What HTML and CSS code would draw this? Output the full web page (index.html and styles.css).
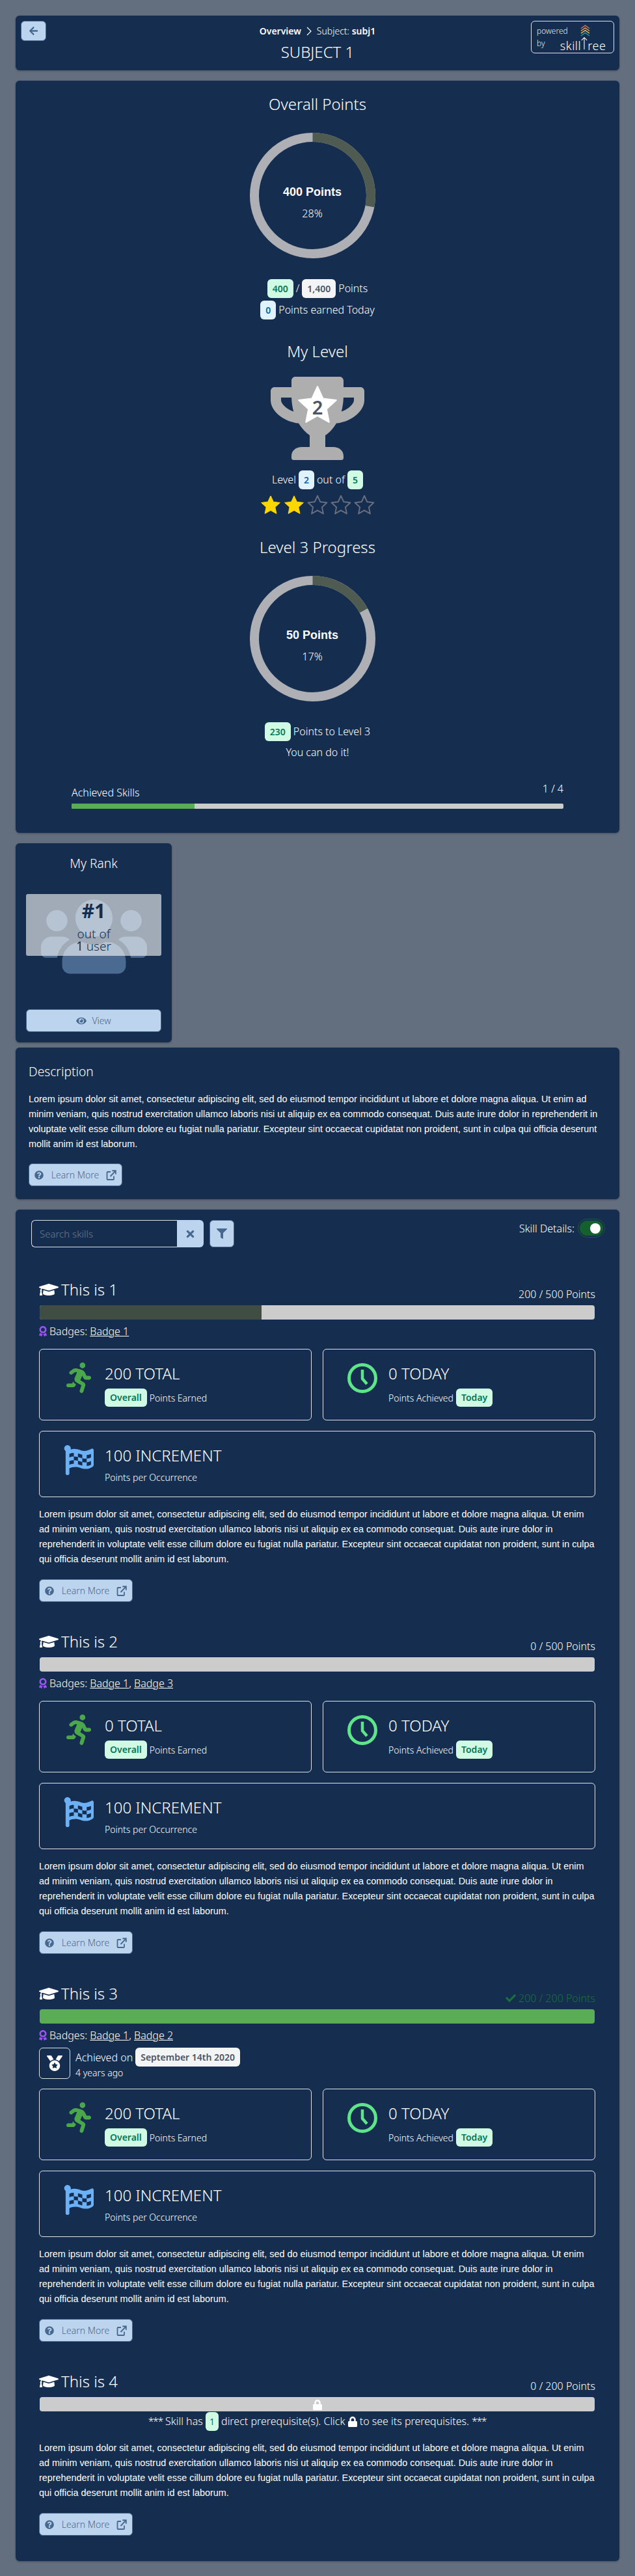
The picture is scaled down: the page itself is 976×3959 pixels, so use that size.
FILE: index.html
```html
<!DOCTYPE html>
<html lang="en">

<head>
    <meta charset="UTF-8">
    <meta name="viewport" content="width=device-width, initial-scale=1.0">
    <title>Subject 1</title>
    <link rel="stylesheet" href="styles.css">
</head>

<body>
    <svg class="icon-defs" xmlns="http://www.w3.org/2000/svg">
        <symbol id="i-cap" viewBox="0 0 640 512"><path d="M622.34 153.2L343.4 67.5c-15.2-4.67-31.6-4.67-46.79 0L17.66 153.2c-23.54 7.23-23.54 38.36 0 45.59l48.63 14.94c-10.67 13.19-17.23 29.28-17.88 46.9C38.78 266.15 32 276.11 32 288c0 10.78 5.68 19.85 13.86 25.65L20.33 428.53C18.11 438.52 25.71 448 35.94 448h56.11c10.24 0 17.84-9.48 15.62-19.47L82.14 313.65C90.32 307.85 96 298.78 96 288c0-11.57-6.47-21.25-15.66-26.87.76-15.02 8.44-28.3 20.69-36.72L296.6 284.5c9.06 2.78 26.44 6.25 46.79 0l278.95-85.7c23.55-7.24 23.55-38.36 0-45.6zM352.79 315.09c-28.53 8.76-52.84 3.92-65.59 0l-145.02-44.55L128 384c0 35.35 85.96 64 192 64s192-28.65 192-64l-14.18-113.47-145.03 44.56z"/></symbol>
        <symbol id="i-run" viewBox="0 0 416 512"><path d="M272 96c26.51 0 48-21.49 48-48S298.51 0 272 0s-48 21.49-48 48 21.49 48 48 48zM113.69 317.47l-14.8 34.52H32c-17.67 0-32 14.33-32 32s14.33 32 32 32h77.45c19.25 0 36.58-11.44 44.11-29.09l8.79-20.52-10.67-6.3c-17.32-10.23-30.06-25.37-37.99-42.61zM384 223.99h-44.03l-26.06-53.25c-12.5-25.55-35.45-44.23-61.78-50.94l-71.08-21.14c-28.3-6.8-57.77-.55-80.84 17.14l-39.67 30.41c-14.03 10.75-16.69 30.83-5.92 44.86s30.84 16.66 44.86 5.92l39.69-30.41c7.67-5.89 17.44-8 25.27-6.14l14.7 4.37-37.46 87.39c-12.62 29.48-1.31 64.01 26.3 80.31l84.98 50.17-27.47 87.73c-5.28 16.86 4.11 34.81 20.97 40.09 3.19 1 6.41 1.48 9.58 1.48 13.61 0 26.23-8.77 30.52-22.45l31.64-101.06c5.91-20.77-2.89-43.08-21.64-54.39l-61.24-36.14 31.31-78.28 20.27 41.44c8 16.34 24.92 26.89 43.11 26.89H384c17.67 0 32-14.33 32-32s-14.33-31.99-32-31.99z"/></symbol>
        <symbol id="i-clock" viewBox="0 0 46 46"><circle cx="23" cy="23" r="20.5" fill="none" stroke="currentColor" stroke-width="5"/><path d="M23 10v14l7 8" fill="none" stroke="currentColor" stroke-width="4.5" stroke-linejoin="round"/></symbol>
        <symbol id="i-flag" viewBox="0 0 512 512">
            <path d="M66 0C34 0 8 25 8 56c0 19 9.500 36 24 46v386c0 13 11 24 24 24h16c13 0 24-11 24-24v-94c28-12 64-22 114-22 54 0 98 35 165 35 48 0 87-16 123-41 9-6 14-16 14-26V88c0-23-24-39-45-21-34 16-77 32-117 32-53 0-98-35-165-35-25 0-47 4-68 12 3-7 4-15 4-24C118 24 95 1 66 0z"/>
            <path class="flag-check" d="M96 150c25-12 50-16 76-16v62c-26 0-51 5-76 16zM243 142c25 6 49 16 74 22v62c-25-6-49-16-74-22zM392 170c25-2 50-10 74-20v62c-24 10-49 18-74 20zM172 196c24 0 48 6 71 8v62c-23-2-47-8-71-8zM317 226c25 6 50 6 75 6v62c-25 0-50 0-75-6zM96 274c25-12 50-16 76-16v62c-26 0-51 5-76 16zM243 266c25 6 49 16 74 22v62c-25-6-49-16-74-22zM392 294c25-2 50-10 74-20v62c-24 10-49 18-74 20z"/>
        </symbol>
        <symbol id="i-award" viewBox="0 0 384 512"><path d="M97.12 362.63c-8.69-8.69-4.16-6.24-25.12-11.85-9.51-2.55-17.87-7.45-25.43-13.32L1.2 448.7c-4.39 10.77 3.81 22.47 15.43 22.03l52.69-2.01L105.56 507c8 8.44 22.04 5.81 26.43-4.96l52.05-127.62c-10.84 6.04-22.87 9.58-35.31 9.58-19.5 0-37.82-7.59-51.61-21.37zM382.8 448.7l-45.37-111.24c-7.56 5.88-15.92 10.77-25.43 13.32-21.07 5.64-16.45 3.18-25.12 11.85-13.79 13.78-32.12 21.37-51.62 21.37-12.44 0-24.47-3.55-35.31-9.58L252 502.04c4.39 10.77 18.44 13.4 26.43 4.96l36.25-38.28 52.69 2.01c11.62.44 19.82-11.27 15.43-22.03zM263 340c15.28-15.55 17.03-14.21 38.79-20.14 13.89-3.79 24.75-14.84 28.47-28.98 7.48-28.4 5.54-24.97 25.95-45.75 10.17-10.35 14.14-25.44 10.42-39.58-7.47-28.38-7.48-24.42 0-52.83 3.72-14.14-.25-29.23-10.42-39.58-20.41-20.78-18.47-17.36-25.95-45.75-3.72-14.14-14.58-25.19-28.47-28.98-27.88-7.61-24.52-5.62-44.95-26.41-10.17-10.35-25-14.4-38.89-10.61-27.87 7.6-23.98 7.61-51.9 0-13.89-3.79-28.72.25-38.89 10.61-20.41 20.78-17.05 18.8-44.94 26.41-13.89 3.79-24.75 14.84-28.47 28.98-7.47 28.39-5.54 24.97-25.95 45.75-10.17 10.35-14.15 25.44-10.42 39.58 7.47 28.36 7.48 24.4 0 52.82-3.72 14.14.25 29.23 10.42 39.59 20.41 20.78 18.47 17.35 25.95 45.75 3.72 14.14 14.58 25.19 28.47 28.98C104.6 325.96 106.27 325 121 340c13.23 13.47 33.84 15.88 49.74 5.82a39.676 39.676 0 0 1 42.53 0c15.89 10.06 36.5 7.65 49.73-5.82zM97.66 175.96c0-53.03 42.24-96.02 94.34-96.02s94.34 42.99 94.34 96.02-42.24 96.02-94.34 96.02-94.34-42.99-94.34-96.02z"/></symbol>
        <symbol id="i-question" viewBox="0 0 512 512"><path d="M504 256c0 136.997-111.043 248-248 248S8 392.997 8 256C8 119.083 119.043 8 256 8s248 111.083 248 248zM262.655 90c-54.497 0-89.255 22.957-116.549 63.758-3.536 5.286-2.353 12.415 2.715 16.258l34.699 26.31c5.205 3.947 12.621 3.008 16.665-2.122 17.864-22.658 30.113-35.797 57.303-35.797 20.429 0 45.698 13.148 45.698 32.958 0 14.976-12.363 22.667-32.534 33.976C247.128 238.528 216 254.941 216 296v4c0 6.627 5.373 12 12 12h56c6.627 0 12-5.373 12-12v-1.333c0-28.462 83.186-29.647 83.186-106.667 0-58.002-60.165-102-116.531-102zM256 338c-25.365 0-46 20.635-46 46 0 25.364 20.635 46 46 46s46-20.636 46-46c0-25.365-20.635-46-46-46z"/></symbol>
        <symbol id="i-link" viewBox="0 0 16 16"><path d="M7 3H2.500A1 1 0 0 0 1.500 4v10a1 1 0 0 0 1 1h8.500a1 1 0 0 0 1-1V9.500" fill="none" stroke="currentColor" stroke-width="1.800"/><path d="M6.500 10L14 2.200M9.300 1.200h5.500v5.500" fill="none" stroke="currentColor" stroke-width="1.900"/></symbol>
        <symbol id="i-lock" viewBox="0 0 448 512"><path d="M400 224h-24v-72C376 68.200 307.800 0 224 0S72 68.200 72 152v72H48c-26.500 0-48 21.500-48 48v192c0 26.500 21.500 48 48 48h352c26.500 0 48-21.500 48-48V272c0-26.500-21.500-48-48-48zm-104 0H152v-72c0-39.700 32.300-72 72-72s72 32.300 72 72v72z"/></symbol>
        <symbol id="i-star" viewBox="0 0 32 32"><path d="M16 2l4.300 9.300 10.100 1.200-7.500 6.900 2 10L16 24.400l-8.900 5 2-10-7.500-6.900 10.100-1.200z" stroke-linejoin="round"/></symbol>
    </svg>

    <header class="card top-card">
        <button class="btn btn-back"><svg viewBox="0 0 448 512" class="icon-arrow"><path d="M257.500 445.100l-22.200 22.200c-9.400 9.400-24.600 9.400-33.900 0L7 273c-9.400-9.400-9.400-24.600 0-33.900L201.400 44.700c9.400-9.400 24.600-9.400 33.900 0l22.200 22.200c9.500 9.500 9.300 25-.4 34.300L136.600 216H424c13.300 0 24 10.700 24 24v32c0 13.300-10.700 24-24 24H136.600l120.500 114.800c9.800 9.300 10 24.800.4 34.300z"/></svg></button>
        <div class="crumbs">
            <b>Overview</b>
            <svg class="crumb-sep" viewBox="0 0 8 14"><path d="M1 1l6 6-6 6" fill="none" stroke="currentColor" stroke-width="1.200"/></svg>
            <span>Subject: <b>subj1</b></span>
        </div>
        <h1 class="page-title">SUBJECT 1</h1>
        <div class="powered">
            <div class="powered-by">powered<br>by</div>
            <div class="logo">
                <svg class="logo-tree" viewBox="0 0 16 22">
                    <path d="M1 6l7-5 7 5" stroke="#e2704f"/>
                    <path d="M1 10l7-5 7 5" stroke="#f0a35e"/>
                    <path d="M1 14l7-5 7 5" stroke="#e9c46a"/>
                    <path d="M1 18l7-5 7 5" stroke="#2a9d8f"/>
                </svg>
                <div class="logo-word">skill<svg class="logo-arrow" viewBox="0 0 12 24"><path d="M1 7l5-5 5 5M6 2v22" fill="none" stroke="#fff" stroke-width="1.300"/></svg>ree</div>
            </div>
        </div>
    </header>

    <section class="card overview-card">
        <h2 class="section-title">Overall Points</h2>
        <div class="ring-wrap">
            <div class="ring">
                <svg viewBox="0 0 193 193" width="193" height="193">
                    <circle cx="96.500" cy="96.500" r="89.500" class="ring-track"/>
                    <circle cx="96.500" cy="96.500" r="89.500" class="ring-fill" pathLength="100" stroke-dasharray="28 72" transform="rotate(-90 96.500 96.500)"/>
                </svg>
                <div class="ring-value">400 Points</div>
                <div class="ring-percent">28%</div>
            </div>
        </div>
        <div class="pill-row first"><span class="pill green">400</span> / <span class="pill gray">1,400</span> Points</div>
        <div class="pill-row"><span class="pill blue">0</span> Points earned Today</div>

        <h2 class="section-title level-title">My Level</h2>
        <div class="trophy">
            <svg viewBox="0 0 576 512" width="144" height="128" class="trophy-cup"><path d="M552 64H448V24c0-13.300-10.700-24-24-24H152c-13.300 0-24 10.700-24 24v40H24C10.700 64 0 74.700 0 88v56c0 35.700 22.500 72.400 61.900 100.700 31.500 22.700 69.800 37.100 110 41.700C203.300 338.500 240 360 240 360v72h-48c-35.300 0-64 20.700-64 56v12c0 6.600 5.400 12 12 12h296c6.600 0 12-5.400 12-12v-12c0-35.300-28.700-56-64-56h-48v-72s36.700-21.500 68.100-73.600c40.300-4.600 78.600-19 110-41.700 39.300-28.300 61.900-65 61.900-100.700V88c0-13.300-10.700-24-24-24zM99.300 192.800C74.900 175.200 64 155.600 64 144v-16h64.200c1 32.600 5.800 61.200 12.800 86.200-15.100-5.200-29.200-12.400-41.700-21.400zM512 144c0 16.100-17.700 36.100-35.300 48.800-12.500 9-26.700 16.200-41.800 21.400 7-25 11.800-53.600 12.800-86.200H512v16z"/></svg>
            <svg class="trophy-star" viewBox="0 0 32 32"><use href="#i-star"/></svg>
            <span class="trophy-level">2</span>
        </div>
        <div class="pill-row level-row">Level <span class="pill blue">2</span> out of <span class="pill green">5</span></div>
        <div class="stars">
            <svg class="star on"><use href="#i-star"/></svg>
            <svg class="star on"><use href="#i-star"/></svg>
            <svg class="star"><use href="#i-star"/></svg>
            <svg class="star"><use href="#i-star"/></svg>
            <svg class="star"><use href="#i-star"/></svg>
        </div>

        <h2 class="section-title next-title">Level 3 Progress</h2>
        <div class="ring-wrap">
            <div class="ring">
                <svg viewBox="0 0 193 193" width="193" height="193">
                    <circle cx="96.500" cy="96.500" r="89.500" class="ring-track"/>
                    <circle cx="96.500" cy="96.500" r="89.500" class="ring-fill" pathLength="100" stroke-dasharray="17 83" transform="rotate(-90 96.500 96.500)"/>
                </svg>
                <div class="ring-value">50 Points</div>
                <div class="ring-percent">17%</div>
            </div>
        </div>
        <div class="pill-row first"><span class="pill green">230</span> Points to Level 3</div>
        <div class="cheer">You can do it!</div>

        <div class="achieved">
            <div class="achieved-head"><span class="achieved-label">Achieved Skills</span><span class="achieved-count">1 / 4</span></div>
            <div class="bar-thin"><div class="bar-thin-fill"></div></div>
        </div>
    </section>

    <section class="card rank-card">
        <h3 class="sub-title">My Rank</h3>
        <div class="rank-art">
            <svg class="rank-users" viewBox="0 32 640 448"><path d="M96 224c35.300 0 64-28.700 64-64s-28.700-64-64-64-64 28.700-64 64 28.700 64 64 64zm448 0c35.300 0 64-28.700 64-64s-28.700-64-64-64-64 28.700-64 64 28.700 64 64 64zm32 32h-64c-17.600 0-33.500 7.100-45.100 18.600 40.300 22.100 68.900 62 75.100 109.400h66c17.700 0 32-14.300 32-32v-32c0-35.300-28.700-64-64-64zm-256 0c61.900 0 112-50.100 112-112S381.900 32 320 32 208 82.100 208 144s50.100 112 112 112zm76.800 32h-8.300c-20.800 10-43.900 16-68.500 16s-47.600-6-68.500-16h-8.300C179.600 288 128 339.600 128 403.200V432c0 26.500 21.500 48 48 48h288c26.500 0 48-21.500 48-48v-28.800c0-63.600-51.600-115.200-115.200-115.200zm-223.700-13.400C161.500 263.100 145.600 256 128 256H64c-35.300 0-64 28.700-64 64v32c0 17.700 14.300 32 32 32h65.900c6.300-47.400 34.900-87.300 75.200-109.400z"/></svg>
            <div class="rank-overlay">
                <div class="rank-num">#1</div>
                <div class="rank-text">out of</div>
                <div class="rank-text"><b>1</b> user</div>
            </div>
        </div>
        <button class="btn btn-view"><svg viewBox="0 0 576 512" class="icon-eye"><path d="M572.520 241.400C518.290 135.590 410.930 64 288 64S57.680 135.640 3.480 241.410a32.350 32.350 0 0 0 0 29.190C57.710 376.410 165.070 448 288 448s230.320-71.640 284.520-177.410a32.350 32.350 0 0 0 0-29.190zM288 400a144 144 0 1 1 144-144 143.930 143.930 0 0 1-144 144zm0-240a95.310 95.310 0 0 0-25.310 3.790 47.850 47.850 0 0 1-66.900 66.900A95.780 95.780 0 1 0 288 160z"/></svg>View</button>
    </section>

    <section class="card desc-card">
        <h3 class="sub-title desc-title">Description</h3>
        <p class="lorem">Lorem ipsum dolor sit amet, consectetur adipiscing elit, sed do eiusmod tempor incididunt ut labore et dolore magna aliqua. Ut enim ad minim veniam, quis nostrud exercitation ullamco laboris nisi ut aliquip ex ea commodo consequat. Duis aute irure dolor in reprehenderit in voluptate velit esse cillum dolore eu fugiat nulla pariatur. Excepteur sint occaecat cupidatat non proident, sunt in culpa qui officia deserunt mollit anim id est laborum.</p>
        <button class="btn btn-learn"><svg class="icon-q"><use href="#i-question"/></svg>Learn More<svg class="icon-ext"><use href="#i-link"/></svg></button>
    </section>

    <section class="card skills-card">
        <div class="skills-bar">
            <div class="search">
                <input class="search-input" type="text" placeholder="Search skills">
                <button class="search-clear"><svg viewBox="0 0 352 512" class="icon-x"><path d="M242.720 256l100.070-100.070c12.280-12.280 12.280-32.190 0-44.480l-22.240-22.240c-12.280-12.280-32.190-12.280-44.480 0L176 189.280 75.930 89.210c-12.280-12.280-32.190-12.280-44.480 0L9.210 111.450c-12.280 12.280-12.280 32.190 0 44.480L109.280 256 9.210 356.070c-12.280 12.280-12.280 32.190 0 44.480l22.240 22.240c12.280 12.280 32.200 12.280 44.480 0L176 322.720l100.070 100.070c12.280 12.280 32.200 12.280 44.480 0l22.240-22.240c12.280-12.280 12.280-32.190 0-44.480L242.720 256z"/></svg></button>
                <button class="btn btn-filter"><svg viewBox="0 0 512 512" class="icon-filter"><path d="M487.976 0H24.028C2.710 0-8.047 25.866 7.058 40.971L192 225.941V432c0 7.831 3.821 15.170 10.237 19.662l80 55.980C298.020 518.690 320 507.493 320 487.980V225.941l184.947-184.970C520.021 25.896 509.338 0 487.976 0z"/></svg></button>
            </div>
            <div class="details-toggle">Skill Details:<span class="switch"><span class="switch-knob"></span></span></div>
        </div>

        <article class="skill">
            <div class="skill-head">
                <h4 class="skill-title"><svg class="icon-cap"><use href="#i-cap"/></svg>This is 1</h4>
                <span class="skill-points">200 / 500 Points</span>
            </div>
            <div class="bar"><div class="bar-fill dark w40"></div></div>
            <div class="badges"><svg class="icon-award"><use href="#i-award"/></svg>Badges: <a href="#">Badge 1</a></div>
            <div class="stats">
                <div class="stat">
                    <div class="stat-icon"><svg class="ic-run"><use href="#i-run"/></svg></div>
                    <div><div class="stat-num">200 TOTAL</div><div class="stat-sub"><span class="pill green">Overall</span> Points Earned</div></div>
                </div>
                <div class="stat">
                    <div class="stat-icon"><svg class="ic-clock"><use href="#i-clock"/></svg></div>
                    <div><div class="stat-num">0 TODAY</div><div class="stat-sub">Points Achieved <span class="pill green">Today</span></div></div>
                </div>
                <div class="stat wide">
                    <div class="stat-icon"><svg class="ic-flag"><use href="#i-flag"/></svg></div>
                    <div><div class="stat-num">100 INCREMENT</div><div class="stat-sub plain">Points per Occurrence</div></div>
                </div>
            </div>
            <p class="lorem skill-text">Lorem ipsum dolor sit amet, consectetur adipiscing elit, sed do eiusmod tempor incididunt ut labore et dolore magna aliqua. Ut enim ad minim veniam, quis nostrud exercitation ullamco laboris nisi ut aliquip ex ea commodo consequat. Duis aute irure dolor in reprehenderit in voluptate velit esse cillum dolore eu fugiat nulla pariatur. Excepteur sint occaecat cupidatat non proident, sunt in culpa qui officia deserunt mollit anim id est laborum.</p>
            <button class="btn btn-learn"><svg class="icon-q"><use href="#i-question"/></svg>Learn More<svg class="icon-ext"><use href="#i-link"/></svg></button>
        </article>

        <article class="skill">
            <div class="skill-head">
                <h4 class="skill-title"><svg class="icon-cap"><use href="#i-cap"/></svg>This is 2</h4>
                <span class="skill-points">0 / 500 Points</span>
            </div>
            <div class="bar"></div>
            <div class="badges"><svg class="icon-award"><use href="#i-award"/></svg>Badges: <a href="#">Badge 1</a>, <a href="#">Badge 3</a></div>
            <div class="stats">
                <div class="stat">
                    <div class="stat-icon"><svg class="ic-run"><use href="#i-run"/></svg></div>
                    <div><div class="stat-num">0 TOTAL</div><div class="stat-sub"><span class="pill green">Overall</span> Points Earned</div></div>
                </div>
                <div class="stat">
                    <div class="stat-icon"><svg class="ic-clock"><use href="#i-clock"/></svg></div>
                    <div><div class="stat-num">0 TODAY</div><div class="stat-sub">Points Achieved <span class="pill green">Today</span></div></div>
                </div>
                <div class="stat wide">
                    <div class="stat-icon"><svg class="ic-flag"><use href="#i-flag"/></svg></div>
                    <div><div class="stat-num">100 INCREMENT</div><div class="stat-sub plain">Points per Occurrence</div></div>
                </div>
            </div>
            <p class="lorem skill-text">Lorem ipsum dolor sit amet, consectetur adipiscing elit, sed do eiusmod tempor incididunt ut labore et dolore magna aliqua. Ut enim ad minim veniam, quis nostrud exercitation ullamco laboris nisi ut aliquip ex ea commodo consequat. Duis aute irure dolor in reprehenderit in voluptate velit esse cillum dolore eu fugiat nulla pariatur. Excepteur sint occaecat cupidatat non proident, sunt in culpa qui officia deserunt mollit anim id est laborum.</p>
            <button class="btn btn-learn"><svg class="icon-q"><use href="#i-question"/></svg>Learn More<svg class="icon-ext"><use href="#i-link"/></svg></button>
        </article>

        <article class="skill">
            <div class="skill-head">
                <h4 class="skill-title"><svg class="icon-cap"><use href="#i-cap"/></svg>This is 3</h4>
                <span class="skill-points done"><svg viewBox="0 0 512 512" class="icon-check"><path d="M173.898 439.404l-166.400-166.400c-9.997-9.997-9.997-26.206 0-36.204l36.203-36.204c9.997-9.998 26.207-9.998 36.204 0L192 312.690 432.095 72.596c9.997-9.997 26.207-9.997 36.204 0l36.203 36.204c9.997 9.997 9.997 26.206 0 36.204l-294.400 294.401c-9.998 9.997-26.207 9.997-36.204-.001z"/></svg>200 / 200 Points</span>
            </div>
            <div class="bar"><div class="bar-fill full"></div></div>
            <div class="badges"><svg class="icon-award"><use href="#i-award"/></svg>Badges: <a href="#">Badge 1</a>, <a href="#">Badge 2</a></div>
            <div class="achieved-on">
                <div class="medal-box"><svg viewBox="0 0 512 512" class="icon-medal"><path d="M223.750 130.750L154.620 15.540A31.997 31.997 0 0 0 127.180 0H16.030C3.080 0-4.500 14.570 2.920 25.180l111.270 158.960c29.720-27.770 67.520-46.830 109.560-53.390zM495.970 0H384.820c-11.240 0-21.660 5.900-27.440 15.540l-69.130 115.210c42.040 6.560 79.840 25.620 109.560 53.380L509.080 25.180C516.500 14.570 508.920 0 495.970 0zM256 160c-97.200 0-176 78.800-176 176s78.800 176 176 176 176-78.800 176-176-78.800-176-176-176zm92.520 157.260l-37.930 36.960 8.970 52.220c1.600 9.360-8.260 16.510-16.650 12.090L256 393.880l-46.900 24.650c-8.400 4.450-18.250-2.740-16.650-12.090l8.970-52.220-37.930-36.960c-6.820-6.640-3.050-18.230 6.350-19.590l52.430-7.640 23.430-47.520c2.110-4.280 6.190-6.390 10.280-6.390 4.110 0 8.220 2.140 10.330 6.390l23.430 47.520 52.430 7.640c9.400 1.360 13.170 12.950 6.350 19.590z"/></svg></div>
                <div>
                    <div class="achieved-date">Achieved on <span class="pill gray">September 14th 2020</span></div>
                    <div class="achieved-ago">4 years ago</div>
                </div>
            </div>
            <div class="stats">
                <div class="stat">
                    <div class="stat-icon"><svg class="ic-run"><use href="#i-run"/></svg></div>
                    <div><div class="stat-num">200 TOTAL</div><div class="stat-sub"><span class="pill green">Overall</span> Points Earned</div></div>
                </div>
                <div class="stat">
                    <div class="stat-icon"><svg class="ic-clock"><use href="#i-clock"/></svg></div>
                    <div><div class="stat-num">0 TODAY</div><div class="stat-sub">Points Achieved <span class="pill green">Today</span></div></div>
                </div>
                <div class="stat wide">
                    <div class="stat-icon"><svg class="ic-flag"><use href="#i-flag"/></svg></div>
                    <div><div class="stat-num">100 INCREMENT</div><div class="stat-sub plain">Points per Occurrence</div></div>
                </div>
            </div>
            <p class="lorem skill-text">Lorem ipsum dolor sit amet, consectetur adipiscing elit, sed do eiusmod tempor incididunt ut labore et dolore magna aliqua. Ut enim ad minim veniam, quis nostrud exercitation ullamco laboris nisi ut aliquip ex ea commodo consequat. Duis aute irure dolor in reprehenderit in voluptate velit esse cillum dolore eu fugiat nulla pariatur. Excepteur sint occaecat cupidatat non proident, sunt in culpa qui officia deserunt mollit anim id est laborum.</p>
            <button class="btn btn-learn"><svg class="icon-q"><use href="#i-question"/></svg>Learn More<svg class="icon-ext"><use href="#i-link"/></svg></button>
        </article>

        <article class="skill">
            <div class="skill-head">
                <h4 class="skill-title"><svg class="icon-cap"><use href="#i-cap"/></svg>This is 4</h4>
                <span class="skill-points">0 / 200 Points</span>
            </div>
            <div class="bar locked"><svg class="bar-lock"><use href="#i-lock"/></svg></div>
            <div class="prereq"><span class="stars-mark">***</span> Skill has <span class="pill green thin">1</span> direct prerequisite(s). Click <svg class="icon-lock"><use href="#i-lock"/></svg> to see its prerequisites. <span class="stars-mark">***</span></div>
            <p class="lorem skill-text tight">Lorem ipsum dolor sit amet, consectetur adipiscing elit, sed do eiusmod tempor incididunt ut labore et dolore magna aliqua. Ut enim ad minim veniam, quis nostrud exercitation ullamco laboris nisi ut aliquip ex ea commodo consequat. Duis aute irure dolor in reprehenderit in voluptate velit esse cillum dolore eu fugiat nulla pariatur. Excepteur sint occaecat cupidatat non proident, sunt in culpa qui officia deserunt mollit anim id est laborum.</p>
            <button class="btn btn-learn"><svg class="icon-q"><use href="#i-question"/></svg>Learn More<svg class="icon-ext"><use href="#i-link"/></svg></button>
        </article>
    </section>
</body>

</html>
```

FILE: styles.css
```css
* {
    box-sizing: border-box;
    margin: 0;
    padding: 0;
}

body {
    padding: 24px 24px 23px;
    background-color: #636e7e;
    color: #fff;
    font-family: "Noto Sans", sans-serif;
    font-size: 16px;
    font-weight: 300;
    line-height: 24px;
}

.icon-defs {
    display: none;
}

.card {
    margin-bottom: 16px;
    background-color: #152e4f;
    border-radius: 6px;
    box-shadow: 0 1px 3px rgba(0, 0, 0, 0.3);
}

/* buttons */
.btn {
    display: flex;
    align-items: center;
    justify-content: center;
    background-color: #bdd4ee;
    border: 1px solid #47698f;
    border-radius: 6px;
    color: #47698f;
    font-family: inherit;
    font-weight: 300;
    cursor: pointer;
}

.btn-learn {
    width: 144px;
    height: 35px;
    margin-top: 18px;
    font-size: 14px;
}

.icon-q {
    width: 14px;
    height: 14px;
    margin-right: 12px;
    fill: currentColor;
}

.icon-ext {
    width: 16px;
    height: 16px;
    margin-left: 11px;
    color: #47698f;
}

/* header */
.top-card {
    position: relative;
    height: 84px;
    padding-top: 12px;
    text-align: center;
}

.btn-back {
    position: absolute;
    top: 8px;
    left: 8px;
    width: 39px;
    height: 31px;
}

.icon-arrow {
    width: 15px;
    height: 15px;
    fill: currentColor;
}

.crumbs {
    display: flex;
    justify-content: center;
    align-items: center;
    gap: 8px;
    font-size: 14px;
}

.crumbs b {
    font-weight: 600;
}

.crumb-sep {
    width: 8px;
    height: 14px;
}

.page-title {
    margin-top: 4px;
    font-size: 24px;
    font-weight: 300;
    line-height: 32px;
}

.powered {
    position: absolute;
    top: 8px;
    right: 8px;
    display: flex;
    width: 128px;
    height: 50px;
    padding: 5px 0 0 8px;
    border: 1px solid #dfe3e8;
    border-radius: 6px;
    text-align: left;
}

.powered-by {
    font-size: 12px;
    line-height: 19px;
    color: #e6e9ee;
}

.logo {
    position: relative;
    flex: 1;
}

.logo-tree {
    position: absolute;
    top: 0;
    left: 19px;
    width: 15px;
    height: 21px;
    fill: none;
    stroke-width: 1.400;
}

.logo-word {
    position: absolute;
    top: 17px;
    left: -12px;
    display: flex;
    align-items: flex-end;
    font-size: 18px;
    line-height: 24px;
    letter-spacing: 0.5px;
}

.logo-arrow {
    width: 10px;
    height: 22px;
    margin-bottom: 5px;
}

/* overview */
.overview-card {
    height: 1156px;
    padding-top: 20px;
    text-align: center;
}

.section-title {
    font-size: 24px;
    font-weight: 300;
    line-height: 32px;
}

.ring-wrap {
    display: flex;
    justify-content: center;
    margin-top: 28px;
    padding-right: 16px;
}

.ring {
    position: relative;
    width: 193px;
    height: 193px;
}

.ring svg {
    display: block;
}

.ring-track,
.ring-fill {
    fill: none;
    stroke-width: 14;
}

.ring-track {
    stroke: #aeb0b5;
}

.ring-fill {
    stroke: #4f5b50;
}

.ring-value {
    position: absolute;
    top: 79px;
    left: 0;
    width: 100%;
    font-family: "Liberation Sans", sans-serif;
    font-size: 18px;
    font-weight: 700;
}

.ring-percent {
    position: absolute;
    top: 112px;
    left: 0;
    width: 100%;
    font-size: 16px;
}

.pill-row {
    display: flex;
    justify-content: center;
    align-items: center;
    gap: 4px;
    margin-top: 4px;
    line-height: 29px;
}

.pill-row.first {
    margin-top: 32px;
}

.pill {
    display: inline-block;
    padding: 4px 8px;
    border-radius: 6px;
    font-size: 14px;
    font-weight: 600;
    line-height: 21px;
}

.pill.green {
    background-color: #d1fae5;
    color: #047857;
}

.pill.gray {
    background-color: #f3f4f6;
    color: #4b5563;
}

.pill.blue {
    background-color: #e0f2fe;
    color: #0369a1;
}

.pill.thin {
    padding: 4px 6px;
    font-weight: 400;
}

.level-title {
    margin-top: 33px;
}

.trophy {
    position: relative;
    width: 144px;
    height: 128px;
    margin: 23px auto 0;
}

.trophy-cup {
    display: block;
    fill: #aeaeae;
}

.trophy-star {
    position: absolute;
    top: 11px;
    left: 40px;
    width: 64px;
    height: 64px;
    fill: #fff;
    stroke: #fff;
    stroke-width: 1;
}

.trophy-level {
    position: absolute;
    top: 27px;
    left: 0;
    width: 100%;
    color: #4b5563;
    font-size: 29px;
    font-weight: 600;
    line-height: 40px;
}

.level-row {
    margin-top: 16px;
}

.stars {
    display: flex;
    justify-content: center;
    gap: 4px;
    margin-top: 8px;
}

.star {
    width: 32px;
    height: 32px;
    fill: none;
    stroke: #676d7e;
    stroke-width: 2;
}

.star.on {
    fill: #ffd700;
    stroke: #ffd700;
    stroke-width: 1;
}

.next-title {
    margin-top: 33px;
}

.cheer {
    margin-top: 5px;
}

.achieved {
    margin: 38px 86px 0;
    text-align: left;
}

.achieved-head {
    display: flex;
    justify-content: space-between;
}

.achieved-count {
    margin-top: -6px;
}

.bar-thin {
    height: 8px;
    margin-top: 5px;
    background-color: #ccc;
    border-radius: 2px;
    overflow: hidden;
}

.bar-thin-fill {
    width: 25%;
    height: 100%;
    background-color: #5aad55;
}

/* rank */
.rank-card {
    width: 240px;
    height: 306px;
    margin-bottom: 8px;
    padding: 19px 16px 0;
    text-align: center;
}

.sub-title {
    font-size: 19.200px;
    font-weight: 300;
    line-height: 24px;
}

.rank-art {
    position: relative;
    height: 123px;
    margin-top: 35px;
    padding-top: 8px;
}

.rank-users {
    display: block;
    width: 163px;
    height: 115px;
    margin: 0 auto;
    fill: #4a6a91;
}

.rank-overlay {
    position: absolute;
    top: 0;
    left: 0;
    width: 100%;
    height: 95px;
    padding-top: 5px;
    background-color: rgba(255, 255, 255, 0.6);
    border-radius: 3px;
    color: #152e4f;
}

.rank-num {
    margin-bottom: 5px;
    font-size: 30px;
    font-weight: 700;
    line-height: 42px;
}

.rank-text {
    font-size: 19px;
    line-height: 19px;
}

.btn-view {
    width: 100%;
    height: 35px;
    margin-top: 54px;
    font-size: 14px;
}

.icon-eye {
    width: 16px;
    height: 14px;
    margin-right: 8px;
    fill: currentColor;
}

/* description */
.desc-card {
    height: 233px;
    padding: 25px 20px 0;
}

.desc-title {
    line-height: 24px;
}

.lorem {
    margin-top: 19px;
    font-family: "Liberation Sans", sans-serif;
    font-size: 14.400px;
    font-weight: 400;
    line-height: 23px;
}

/* skills */
.skills-card {
    height: 2077px;
    margin-bottom: 0;
    padding: 14px 37px 0 36px;
}

.skills-bar {
    display: flex;
    justify-content: space-between;
    align-items: flex-start;
    height: 44px;
    margin-left: -12px;
    margin-right: -15px;
}

.search {
    display: flex;
    margin-top: 2px;
}

.search-input {
    width: 224px;
    height: 42px;
    padding: 0 12px;
    background-color: transparent;
    border: 1px solid #dfe3e8;
    border-right: none;
    border-radius: 6px 0 0 6px;
    color: #fff;
    font-family: inherit;
    font-size: 15px;
    font-weight: 300;
}

.search-input::placeholder {
    color: #6b7a8f;
}

.search-clear {
    display: flex;
    align-items: center;
    justify-content: center;
    width: 41px;
    height: 42px;
    background-color: #bdd4ee;
    border: none;
    border-radius: 0 6px 6px 0;
    color: #47698f;
}

.icon-x {
    width: 13px;
    height: 17px;
    fill: currentColor;
}

.btn-filter {
    width: 38px;
    height: 42px;
    margin-left: 9px;
}

.icon-filter {
    width: 16px;
    height: 16px;
    fill: currentColor;
}

.details-toggle {
    display: flex;
    align-items: center;
    gap: 5px;
    font-size: 16px;
}

.switch {
    display: flex;
    align-items: center;
    justify-content: flex-end;
    width: 42px;
    height: 29px;
    padding-right: 4px;
    background-color: #15602f;
    border: 3px solid #152e4f;
    outline: 1px solid #1d5a3c;
    outline-offset: -1px;
    border-radius: 15px;
}

.switch-knob {
    width: 16px;
    height: 16px;
    background-color: #fff;
    border-radius: 50%;
}

.skill {
    margin-top: 45px;
}

.skills-bar + .skill {
    margin-top: 49px;
}

.skill-head {
    display: flex;
    justify-content: space-between;
    align-items: flex-end;
    height: 40px;
}

.skill-title {
    display: flex;
    align-items: center;
    margin-bottom: 8px;
    font-size: 24px;
    font-weight: 300;
    line-height: 32px;
}

.icon-cap {
    width: 30px;
    height: 24px;
    margin-right: 4px;
    fill: #fff;
}

.skill-points {
    margin-bottom: 5px;
}

.skill-points.done {
    display: flex;
    align-items: center;
    color: #1a6f3c;
}

.icon-check {
    width: 16px;
    height: 16px;
    margin-right: 4px;
    fill: currentColor;
}

.bar {
    position: relative;
    height: 22px;
    margin: 0 1px;
    background-color: #ccc;
    border-radius: 4px;
    overflow: hidden;
}

.bar-fill {
    height: 100%;
}

.bar-fill.dark {
    background-color: #3f4d43;
}

.bar-fill.full {
    width: 100%;
    background-color: #5aad55;
}

.w40 {
    width: 40%;
}

.bar-lock {
    position: absolute;
    top: 4px;
    left: 50%;
    width: 14px;
    height: 16px;
    margin-left: -7px;
    fill: #fff;
}

.badges {
    display: flex;
    align-items: center;
    margin-top: 6px;
    white-space: pre;
}

.badges a {
    color: #fff;
}

.icon-award {
    width: 12px;
    height: 16px;
    margin-right: 4px;
    fill: #9a55f0;
}

.achieved-on {
    display: flex;
    gap: 8px;
    height: 48px;
    margin-top: 7px;
    margin-bottom: 2px;
}

.medal-box {
    display: flex;
    align-items: center;
    justify-content: center;
    width: 48px;
    height: 48px;
    border: 1px solid #dfe3e8;
    border-radius: 6px;
}

.icon-medal {
    width: 24px;
    height: 24px;
    fill: #fff;
}

.achieved-date {
    display: flex;
    align-items: center;
    gap: 4px;
    height: 29px;
}

.achieved-ago {
    font-size: 14px;
    line-height: 20px;
}

.stats {
    display: grid;
    grid-template-columns: 1fr 1fr;
    gap: 16px 17px;
    margin-top: 15px;
}

.stat {
    display: flex;
    height: 110px;
    padding: 21px 16px 0 37px;
    border: 1px solid #dfe3e8;
    border-radius: 6px;
}

.stat.wide {
    grid-column: 1 / 3;
    height: 102px;
}

.stat-icon {
    display: flex;
    justify-content: center;
    flex: none;
    width: 46px;
    margin-right: 17px;
}

.ic-run {
    width: 38px;
    height: 49px;
    margin-top: -2px;
    fill: #4aa84a;
}

.ic-clock {
    width: 46px;
    height: 46px;
    color: #5ee58a;
}

.ic-flag {
    width: 47px;
    height: 48px;
    margin-top: -1px;
    fill: #6cb0f6;
}

.flag-check {
    fill: #152e4f;
}

.stat-num {
    font-size: 24px;
    line-height: 32px;
}

.stat-sub {
    display: flex;
    align-items: center;
    gap: 4px;
    margin-top: 7px;
    font-size: 14px;
    line-height: 21px;
}

.stat-sub .pill {
    line-height: 20px;
}

.skill-text {
    margin-top: 15px;
    margin-bottom: 19px;
}

.skill-text.tight {
    margin-top: 15px;
}

.skill-text + .btn-learn {
    margin-top: 0;
}

.prereq {
    display: flex;
    justify-content: center;
    align-items: center;
    margin-top: 1px;
    line-height: 29px;
    white-space: pre;
}

.stars-mark {
    letter-spacing: -1.400px;
}

.icon-lock {
    width: 14px;
    height: 16px;
    fill: #fff;
}
```
